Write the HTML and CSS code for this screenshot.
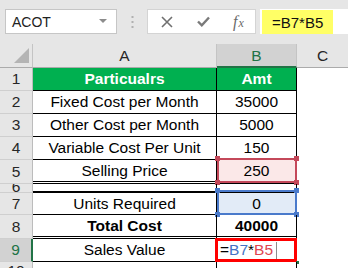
FILE: index.html
```html
<!DOCTYPE html>
<html lang="en">
<head>
    <meta charset="UTF-8">
    <title>Sales Value</title>
    <link rel="stylesheet" href="styles.css">
</head>
<body>

    <div class="bar">
        <div class="namebox">
            <span>ACOT</span>
            <svg class="caret" width="8" height="4" viewBox="0 0 8 4"><path d="M0 0h8L4 4z" fill="#8c8c8c"/></svg>
        </div>
        <div class="grip">
            <svg width="3" height="12" viewBox="0 0 3 12"><rect x="0.5" y="0" width="2" height="2" fill="#b0b0b0"/><rect x="0.5" y="5" width="2" height="2" fill="#b0b0b0"/><rect x="0.5" y="10" width="2" height="2" fill="#b0b0b0"/></svg>
        </div>
        <div class="fxbox">
            <svg class="btn-x" width="12" height="12" viewBox="0 0 12 12"><path d="M1 1L11 11M11 1L1 11" stroke="#707070" stroke-width="1.6"/></svg>
            <svg class="btn-ok" width="13" height="11" viewBox="0 0 13 11"><path d="M1 5.5L4.8 9.3L12 1.5" stroke="#7a7a7a" stroke-width="2.4" fill="none"/></svg>
            <span class="fx"><i>f</i><i class="fx-x">x</i></span>
        </div>
        <div class="input">
            <span class="hl">=B7*B5</span>
        </div>
    </div>

    <div class="sheet">
        <div class="corner"><span class="tri"></span></div>
        <div class="ch">A</div>
        <div class="ch sel">B</div>
        <div class="ch last">C</div>

        <div class="rh">1</div>
        <div class="c head">Particualrs</div>
        <div class="c head num">Amt</div>
        <div class="e"></div>

        <div class="rh">2</div>
        <div class="c">Fixed Cost per Month</div>
        <div class="c num">35000</div>
        <div class="e"></div>

        <div class="rh">3</div>
        <div class="c">Other Cost per Month</div>
        <div class="c num">5000</div>
        <div class="e"></div>

        <div class="rh">4</div>
        <div class="c">Variable Cost Per Unit</div>
        <div class="c num">150</div>
        <div class="e"></div>

        <div class="rh">5</div>
        <div class="c dbl">Selling Price</div>
        <div class="c num dbl ref-red">250
            <span class="refbox"><i class="h tl"></i><i class="h tr"></i><i class="h bl"></i><i class="h br"></i></span>
        </div>
        <div class="e"></div>

        <div class="rh short">6</div>
        <div class="c thick"></div>
        <div class="c num thick"></div>
        <div class="e"></div>

        <div class="rh">7</div>
        <div class="c">Units Required</div>
        <div class="c num ref-blue">0
            <span class="refbox"><i class="h tl"></i><i class="h tr"></i><i class="h bl"></i><i class="h br"></i></span>
        </div>
        <div class="e"></div>

        <div class="rh">8</div>
        <div class="c dbl bold">Total Cost</div>
        <div class="c num dbl bold">40000</div>
        <div class="e"></div>

        <div class="rh sel">9</div>
        <div class="c">Sales Value</div>
        <div class="c edit">=<span class="blue">B7</span>*<span class="red">B5</span><span class="cursor"></span>
            <span class="active"></span>
            <span class="fill"></span>
        </div>
        <div class="e"></div>

        <div class="rh cut">10</div>
        <div class="c none"></div>
        <div class="c num none"></div>
        <div class="e"></div>
    </div>

</body>
</html>
```

FILE: styles.css
```css
body {
    margin: 0;
    width: 348px;
    height: 268px;
    overflow: hidden;
    font-family: "Liberation Sans", Arial, sans-serif;
    background: #ffffff;
}
.bar {
    height: 44px;
    background: #e6e6e6;
    display: flex;
    align-items: flex-start;
    padding: 9px 0 0 5px;
    box-sizing: border-box;
}
.namebox {
    width: 112px;
    height: 25px;
    box-sizing: border-box;
    background: #fff;
    border: 1px solid #c6c6c6;
    display: flex;
    align-items: center;
    justify-content: space-between;
    padding: 0 9px 0 6px;
    font-size: 14px;
    color: #222;
}
.caret {
    margin-top: -2px;
}
.grip {
    width: 30px;
    height: 25px;
    display: flex;
    align-items: center;
    justify-content: center;
}
.fxbox {
    width: 109px;
    height: 25px;
    box-sizing: border-box;
    background: #fff;
    border: 1px solid #d4d4d4;
    display: flex;
    align-items: center;
    padding-left: 13px;
}
.btn-ok {
    margin-left: 24px;
}
.fx {
    margin-left: 23px;
    font-family: "Liberation Serif", "Times New Roman", serif;
    font-size: 16px;
    color: #6a6a6a;
}
.fx-x {
    font-size: 12px;
    margin-left: 1px;
}
.input {
    flex: 1;
    height: 25px;
    margin-left: 4px;
    background: #fff;
    box-sizing: border-box;
    padding: 1px 0 0 2px;
}
.hl {
    display: flex;
    align-items: center;
    width: 71px;
    height: 24px;
    box-sizing: border-box;
    padding-left: 10px;
    background: #ffff66;
    font-size: 15px;
    color: #111;
}
.sheet {
    display: grid;
    grid-template-columns: 33px 184px 80px 1fr;
    grid-template-rows: 24px 23px 23px 23px 23px 24px 9px 22px 24px 23px 1fr;
    height: 224px;
    font-size: 15.5px;
    color: #000;
}
.corner, .ch {
    background: #e6e6e6;
    border-bottom: 1px solid #ababab;
    border-right: 1px solid #c4c4c4;
    box-sizing: border-box;
}
.corner {
    position: relative;
}
.tri {
    position: absolute;
    right: 3px;
    bottom: 4px;
    width: 0;
    height: 0;
    border-left: 15px solid transparent;
    border-bottom: 15px solid #b4b4b4;
}
.ch {
    display: flex;
    align-items: center;
    justify-content: center;
    color: #262626;
    padding-top: 1px;
}
.ch.sel {
    background: #d2d2d2;
    color: #217346;
    border-bottom: 2px solid #217346;
}
.ch.last {
    border-right: none;
}
.rh {
    background: #e6e6e6;
    border-right: 1px solid #bcbcbc;
    border-bottom: 1px solid #cfcfcf;
    box-sizing: border-box;
    display: flex;
    align-items: center;
    justify-content: center;
    color: #262626;
    overflow: hidden;
}
.rh.short {
    align-items: flex-end;
    line-height: 10px;
}
.rh.cut {
    align-items: flex-start;
    line-height: 18px;
    border-bottom: none;
}
.rh.sel {
    background: #d2d2d2;
    color: #217346;
    border-right: 2px solid #217346;
}
.c {
    border-right: 1px solid #000;
    border-bottom: 1px solid #000;
    box-sizing: border-box;
    display: flex;
    align-items: center;
    justify-content: center;
    white-space: nowrap;
    position: relative;
}
.c.head {
    background: #00b050;
    color: #fff;
    font-weight: bold;
}
.c.dbl {
    border-bottom: 3px double #000;
}
.c.thick {
    border-bottom: 2px solid #000;
}
.c.bold {
    font-weight: bold;
}
.c.none {
    border-bottom: none;
}
.e {
    background: #fff;
}
.ref-red {
    background: #fbe8e8;
}
.ref-blue {
    background: #e2ebf7;
}
.refbox {
    position: absolute;
    left: 0;
    right: -1px;
    top: -2px;
    bottom: -2px;
    border: 2px solid #c4485a;
}
.ref-blue .refbox {
    top: -3px;
    bottom: -1px;
    border-color: #4a7acb;
}
.h {
    position: absolute;
    width: 5px;
    height: 5px;
    background: #c4485a;
}
.ref-blue .h {
    background: #4a7acb;
}
.h.tl { left: -4px; top: -4px; }
.h.tr { right: -4px; top: -4px; }
.h.bl { left: -4px; bottom: -4px; }
.h.br { right: -4px; bottom: -4px; }
.c.edit {
    justify-content: flex-start;
    padding-left: 3px;
}
.blue {
    color: #4472c4;
}
.red {
    color: #e0444e;
}
.cursor {
    display: inline-block;
    width: 1px;
    height: 17px;
    background: #8c8c8c;
    margin-left: 3px;
}
.active {
    position: absolute;
    left: -2px;
    right: -1px;
    top: -1px;
    bottom: -1px;
    border: 3px solid #ff0000;
}
.fill {
    position: absolute;
    right: -3px;
    bottom: -3px;
    width: 3px;
    height: 3px;
    background: #217346;
}
```
